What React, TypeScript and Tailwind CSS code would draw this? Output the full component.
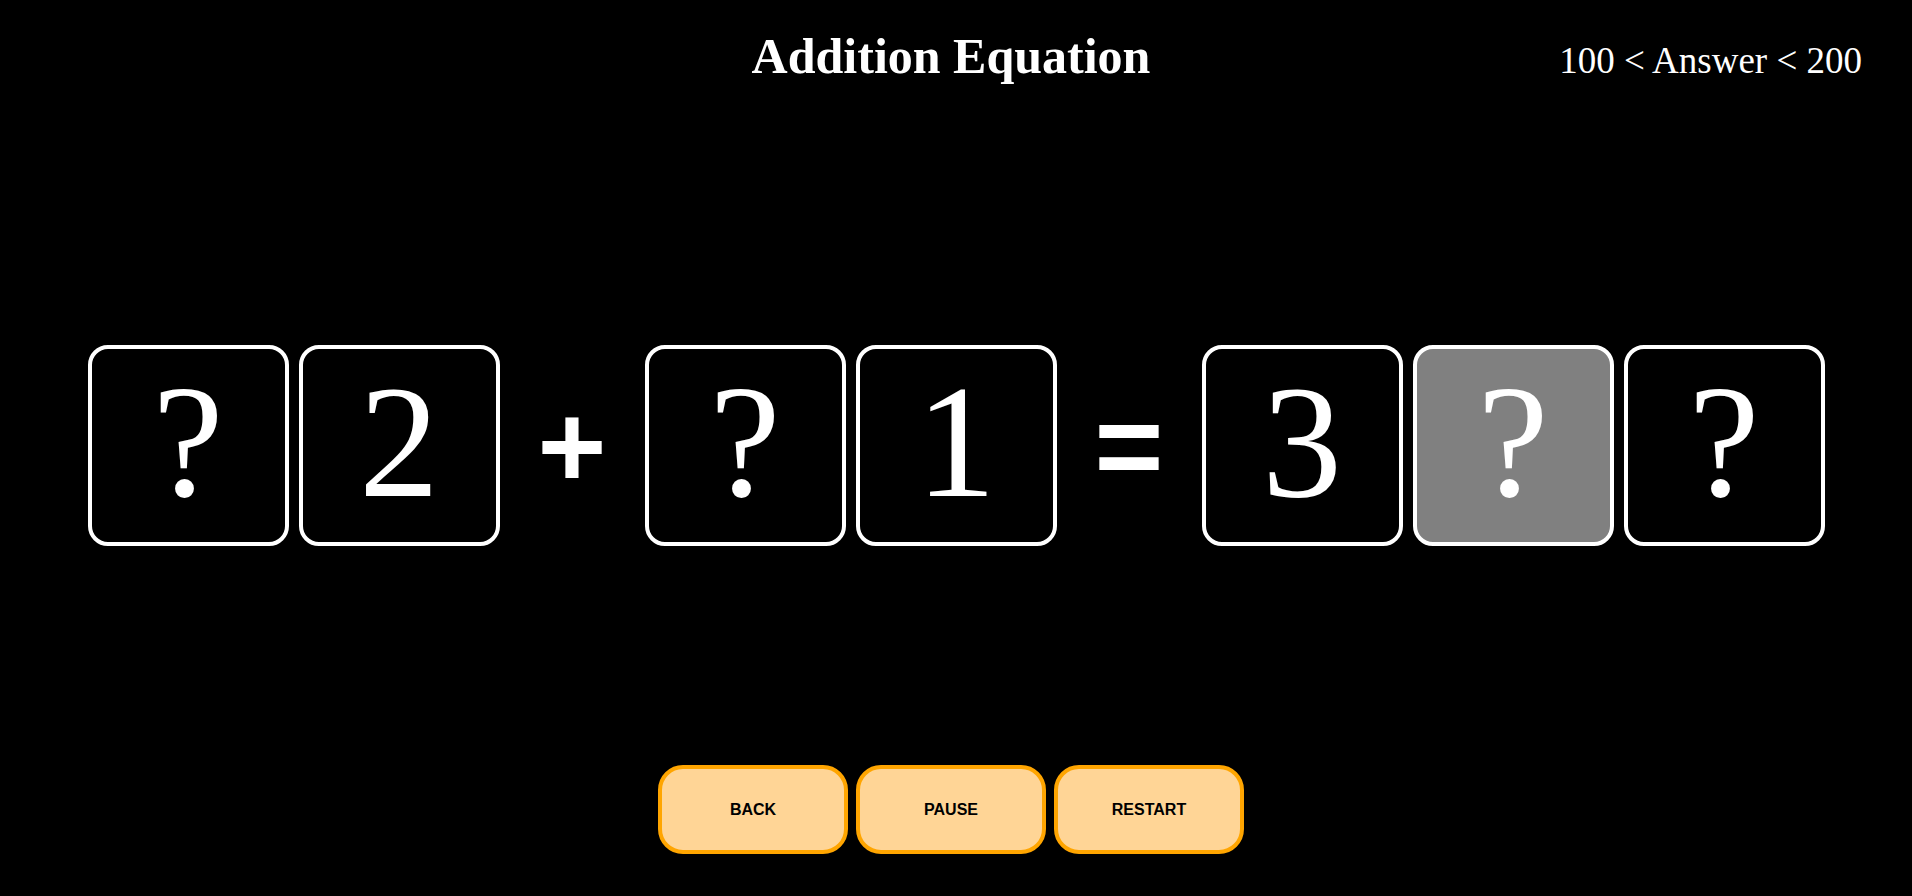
import React, { useState } from 'react';

type Cell = { value: string; active?: boolean };

const serif = "font-['Liberation_Serif','Times_New_Roman',serif]";
const sans = "font-['Liberation_Sans',Arial,sans-serif]";

const DigitBox: React.FC<Cell> = ({ value, active }) => (
    <div className={`w-[201px] h-[201px] border-4 border-white rounded-[20px] flex items-center justify-center pb-[7px] ${active ? 'bg-[#808080]' : 'bg-black'}`}>
        <span className={`${serif} text-[160px] leading-none text-white`}>{value}</span>
    </div>
);

const Operator: React.FC<{ sign: string }> = ({ sign }) => (
    <div className="w-[145px] flex items-center justify-center">
        <span className={`${sans} text-[118px] font-bold leading-none text-white`}>{sign}</span>
    </div>
);

const Group: React.FC<{ cells: Cell[] }> = ({ cells }) => (
    <div className="flex gap-[10px]">
        {cells.map((c, i) => <DigitBox key={i} {...c} />)}
    </div>
);

const App: React.FC = () => {
    const [first] = useState<Cell[]>([{ value: '?' }, { value: '2' }]);
    const [second] = useState<Cell[]>([{ value: '?' }, { value: '1' }]);
    const [answer] = useState<Cell[]>([{ value: '3' }, { value: '?', active: true }, { value: '?' }]);

    return (
        <div className="w-full h-screen bg-black text-white overflow-hidden">
            {/* Header */}
            <div className="grid grid-cols-[1fr_auto_1fr] items-baseline pt-[31px]">
                <div />
                <h1 className={`${serif} text-[50px] font-bold leading-none pr-[10px]`}>Addition Equation</h1>
                <div className={`${serif} text-[37px] leading-none text-right pr-[50px]`}>100 &lt; Answer &lt; 200</div>
            </div>

            {/* Equation */}
            <div className="flex justify-center items-center mt-[264px]">
                <Group cells={first} />
                <Operator sign="+" />
                <Group cells={second} />
                <Operator sign="=" />
                <Group cells={answer} />
            </div>

            {/* Controls */}
            <div className="flex justify-center gap-[8px] mt-[219px] pr-[10px]">
                {['BACK', 'PAUSE', 'RESTART'].map(label => (
                    <button key={label} className={`${sans} w-[190px] h-[89px] border-4 border-[#ffa500] bg-[#ffd596] rounded-[25px] text-[16px] font-bold text-black`}>
                        {label}
                    </button>
                ))}
            </div>
        </div>
    );
};

export default App;
